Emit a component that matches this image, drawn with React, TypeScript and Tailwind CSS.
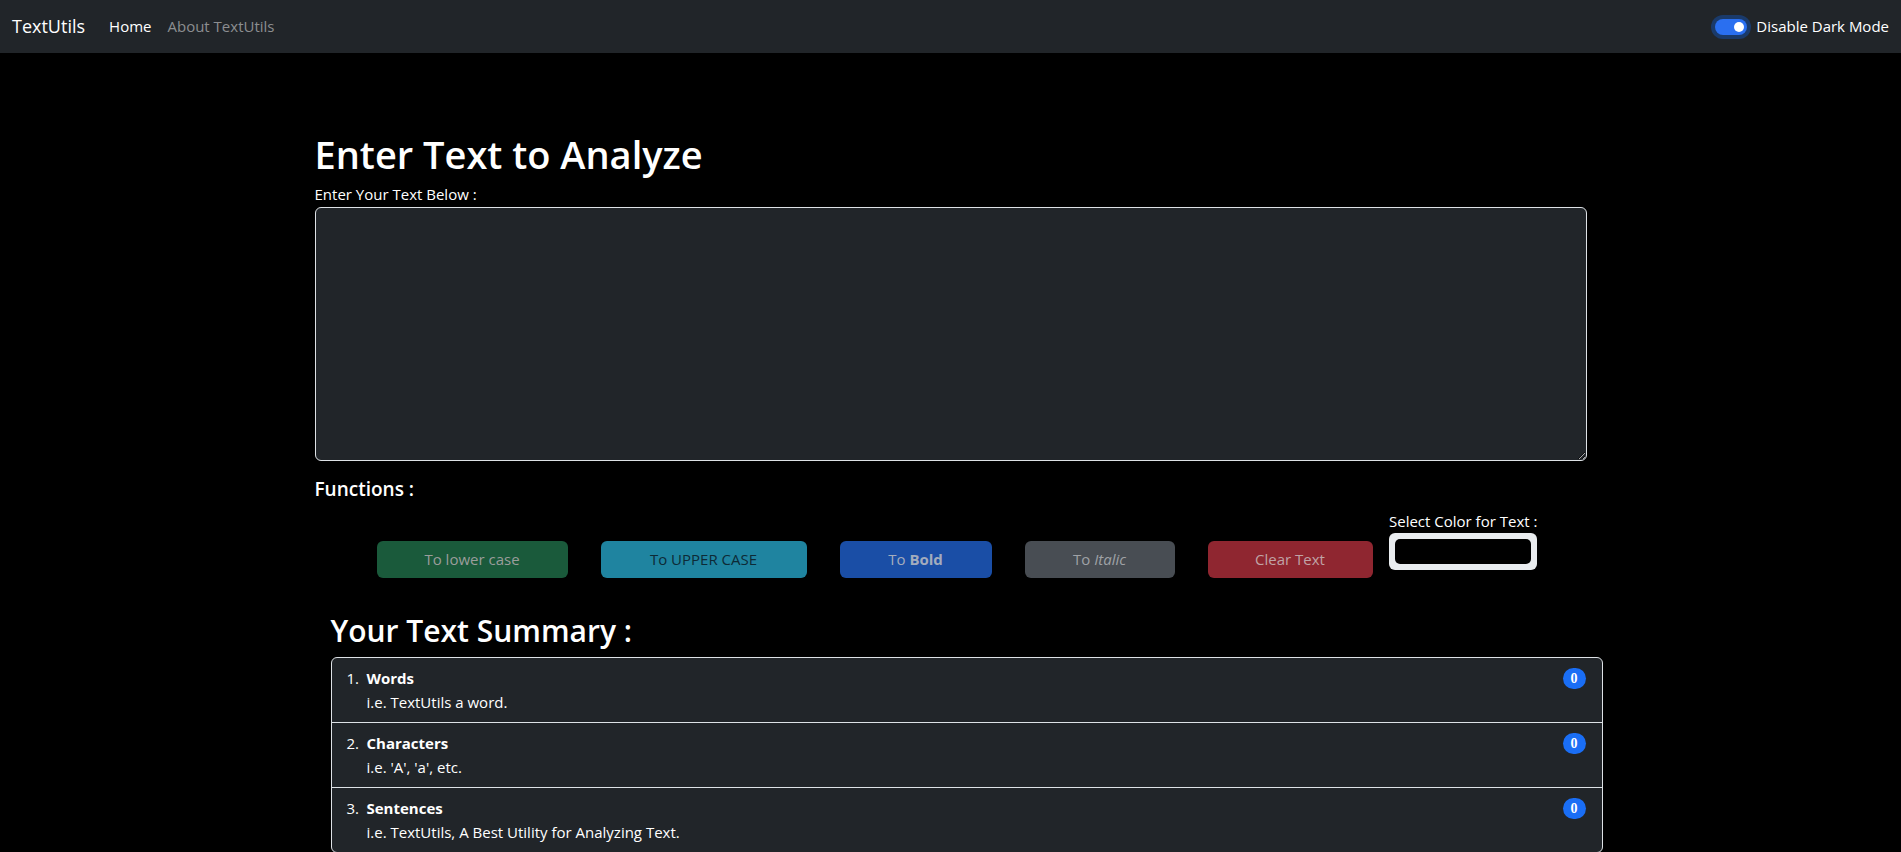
import React from "react";

export default function App() {
  const items = [
    { t: "Words", d: "i.e. TextUtils a word." },
    { t: "Characters", d: "i.e. 'A', 'a', etc." },
    { t: "Sentences", d: "i.e. TextUtils, A Best Utility for Analyzing Text." },
  ];
  return (
    <div className="min-h-screen bg-black text-white font-['Open_Sans',sans-serif]">
      <nav className="h-[53px] bg-[#212529] flex items-center px-3">
        <span className="text-[18px] text-white mr-[24px]">TextUtils</span>
        <span className="text-[15px] text-white mr-4">Home</span>
        <span className="text-[15px] text-[#8c8e90]">About TextUtils</span>
        <div className="ml-auto flex items-center">
          <div className="w-[32px] h-[16px] rounded-full bg-[#2a6ff0] ring-4 ring-[#1a3a6a] flex items-center justify-end pr-[3px] mr-[9px]">
            <div className="w-[10px] h-[10px] rounded-full bg-white" />
          </div>
          <span className="text-[15px]">Disable Dark Mode</span>
        </div>
      </nav>

      <div className="w-[1272px] mx-auto pt-[77px]">
        <h1 className="text-[38px] font-semibold leading-[48px] mb-[6px]">Enter Text to Analyze</h1>
        <label className="block text-[15px] leading-[20px] mb-[3px]">Enter Your Text Below :</label>
        <textarea
          rows={10}
          className="block w-full h-[254px] bg-[#212529] border border-[#dee2e6] rounded-[6px] outline-none text-white px-3 py-[6px]"
        />
        <h5 className="text-[19px] font-semibold mt-[16px] leading-[24px]">Functions :</h5>
        <div className="flex items-end pl-[45.5px] mt-[10px]">
          <button className="mx-[16.5px] w-[191px] h-[37px] rounded-[6px] bg-[#1a5a3b] text-[#9a9d9b] text-[15px]">To lower case</button>
          <button className="mx-[16.5px] w-[206px] h-[37px] rounded-[6px] bg-[#1f84a0] text-[#0d2a36] text-[15px]">To UPPER CASE</button>
          <button className="mx-[16.5px] w-[152px] h-[37px] rounded-[6px] bg-[#1a4ea6] text-[#a3acbd] text-[15px]">To <b>Bold</b></button>
          <button className="mx-[16.5px] w-[150px] h-[37px] rounded-[6px] bg-[#484d53] text-[#9fa2a6] text-[15px]">To <i>Italic</i></button>
          <button className="mx-[16.5px] w-[165px] h-[37px] rounded-[6px] bg-[#8f2630] text-[#c0a3a6] text-[15px]">Clear Text</button>
          <div className="flex flex-col mb-[8px]">
            <span className="text-[15px] leading-[20px] mb-[2px]">Select Color for Text :</span>
            <div className="w-[148px] h-[37px] rounded-[6px] bg-[#e9ecef] p-[6px] flex">
              <div className="flex-1 bg-black rounded-[5px]" />
            </div>
          </div>
        </div>

        <div className="ml-4 w-[1272px] mt-[33px]">
          <h2 className="text-[30px] font-semibold leading-[40px] mb-[6px]">Your Text Summary :</h2>
          <ol className="border border-[#dee2e6] rounded-[6px] bg-[#212529] overflow-hidden">
            {items.map((it, i) => (
              <li key={i} className={"flex items-start justify-between px-4 py-2 " + (i > 0 ? "border-t border-[#dee2e6]" : "")}>
                <div className="flex text-[15px] leading-[24px]">
                  <span className="w-[20px] ml-[-1px]">{i + 1}.</span>
                  <div>
                    <div className="font-bold">{it.t}</div>
                    <div>{it.d}</div>
                  </div>
                </div>
                <span className="mt-[2px] min-w-[23px] h-[21px] px-[6px] rounded-full bg-[#1a6ef5] text-white text-[14px] font-bold flex items-center justify-center font-['Liberation_Serif',serif]">0</span>
              </li>
            ))}
          </ol>
        </div>
      </div>
    </div>
  );
}
